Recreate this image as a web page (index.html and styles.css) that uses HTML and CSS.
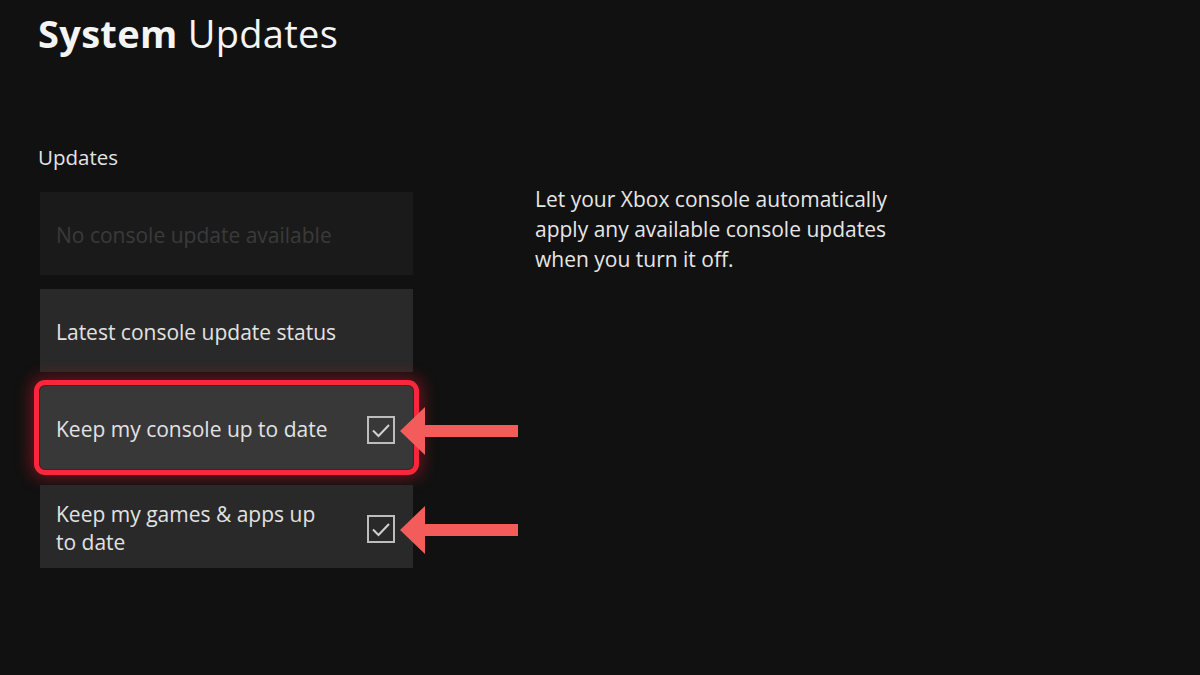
FILE: index.html
```html
<!DOCTYPE html>
<html>
<head>
<meta charset="utf-8">
<link rel="stylesheet" href="styles.css">
</head>
<body>
<div class="page">
  <h1 class="title"><span class="bold">System</span> Updates</h1>
  <div class="main">
    <div class="left">
      <div class="section">Updates</div>
      <div class="list">
        <div class="card card-disabled"><span>No console update available</span></div>
        <div class="card"><span>Latest console update status</span></div>
        <div class="card card-focus">
          <span>Keep my console up to date</span>
          <div class="check"><svg viewBox="0 0 28 28" width="28" height="28"><rect x="1" y="1" width="26" height="26" fill="none" stroke="#bdbdbd" stroke-width="2"/><path d="M6 14.5 L11.5 20 L22 9" fill="none" stroke="#d0d0d0" stroke-width="2"/></svg></div>
          <svg class="arrow" viewBox="0 0 118 50" width="118" height="50"><polygon points="0,25 25,1 25,19 118,19 118,31 25,31 25,49" fill="#f45b5b"/></svg>
        </div>
        <div class="card card-last">
          <span>Keep my games &amp; apps up<br>to date</span>
          <div class="check"><svg viewBox="0 0 28 28" width="28" height="28"><rect x="1" y="1" width="26" height="26" fill="none" stroke="#bdbdbd" stroke-width="2"/><path d="M6 14.5 L11.5 20 L22 9" fill="none" stroke="#d0d0d0" stroke-width="2"/></svg></div>
          <svg class="arrow" viewBox="0 0 118 50" width="118" height="50"><polygon points="0,25 25,1 25,19 118,19 118,31 25,31 25,49" fill="#f45b5b"/></svg>
        </div>
      </div>
    </div>
    <p class="desc">Let your Xbox console automatically<br>apply any available console updates<br>when you turn it off.</p>
  </div>
</div>
</body>
</html>
```

FILE: styles.css
```css
html, body {
  margin: 0;
  padding: 0;
  background: #111111;
  width: 1200px;
  height: 675px;
  overflow: hidden;
}
.page {
  font-family: "Open Sans", "Noto Sans", sans-serif;
  color: #e8e8e8;
  padding-left: 38px;
}
.title {
  margin: 0;
  padding-top: 8px;
  font-size: 38px;
  font-weight: 400;
  line-height: 50px;
  color: #f4f4f4;
  letter-spacing: 0.3px;
}
.bold {
  font-weight: 700;
}
.main {
  display: flex;
  align-items: flex-start;
  margin-top: 86px;
}
.left {
  width: 375px;
}
.section {
  font-size: 20.5px;
  line-height: 26px;
  color: #e4e4e4;
}
.list {
  display: flex;
  flex-direction: column;
  gap: 14px;
  margin-top: 22px;
  margin-left: 2px;
}
.card {
  position: relative;
  width: 373px;
  height: 83px;
  box-sizing: border-box;
  background: #292929;
  display: flex;
  align-items: center;
  justify-content: space-between;
  padding: 3px 18px 0 16px;
  font-size: 21px;
  line-height: 28px;
  color: #e2e2e2;
}
.card-disabled {
  background: #1a1a1a;
  color: #3a3a3a;
}
.card-focus {
  background: #383838;
  border-radius: 5px;
  outline: 5px solid #f8283a;
  outline-offset: 1px;
  box-shadow: 0 0 16px 9px rgba(235, 25, 45, 0.42);
}
.card-last {
  margin-top: 2px;
}
.check {
  width: 28px;
  height: 28px;
  margin-top: 2px;
}
.check svg {
  display: block;
}
.arrow {
  position: absolute;
  left: 360px;
  top: 50%;
  margin-top: -22px;
}
.desc {
  margin: 40px 0 0 122px;
  font-size: 21px;
  line-height: 30px;
  color: #e6e6e6;
}
```
